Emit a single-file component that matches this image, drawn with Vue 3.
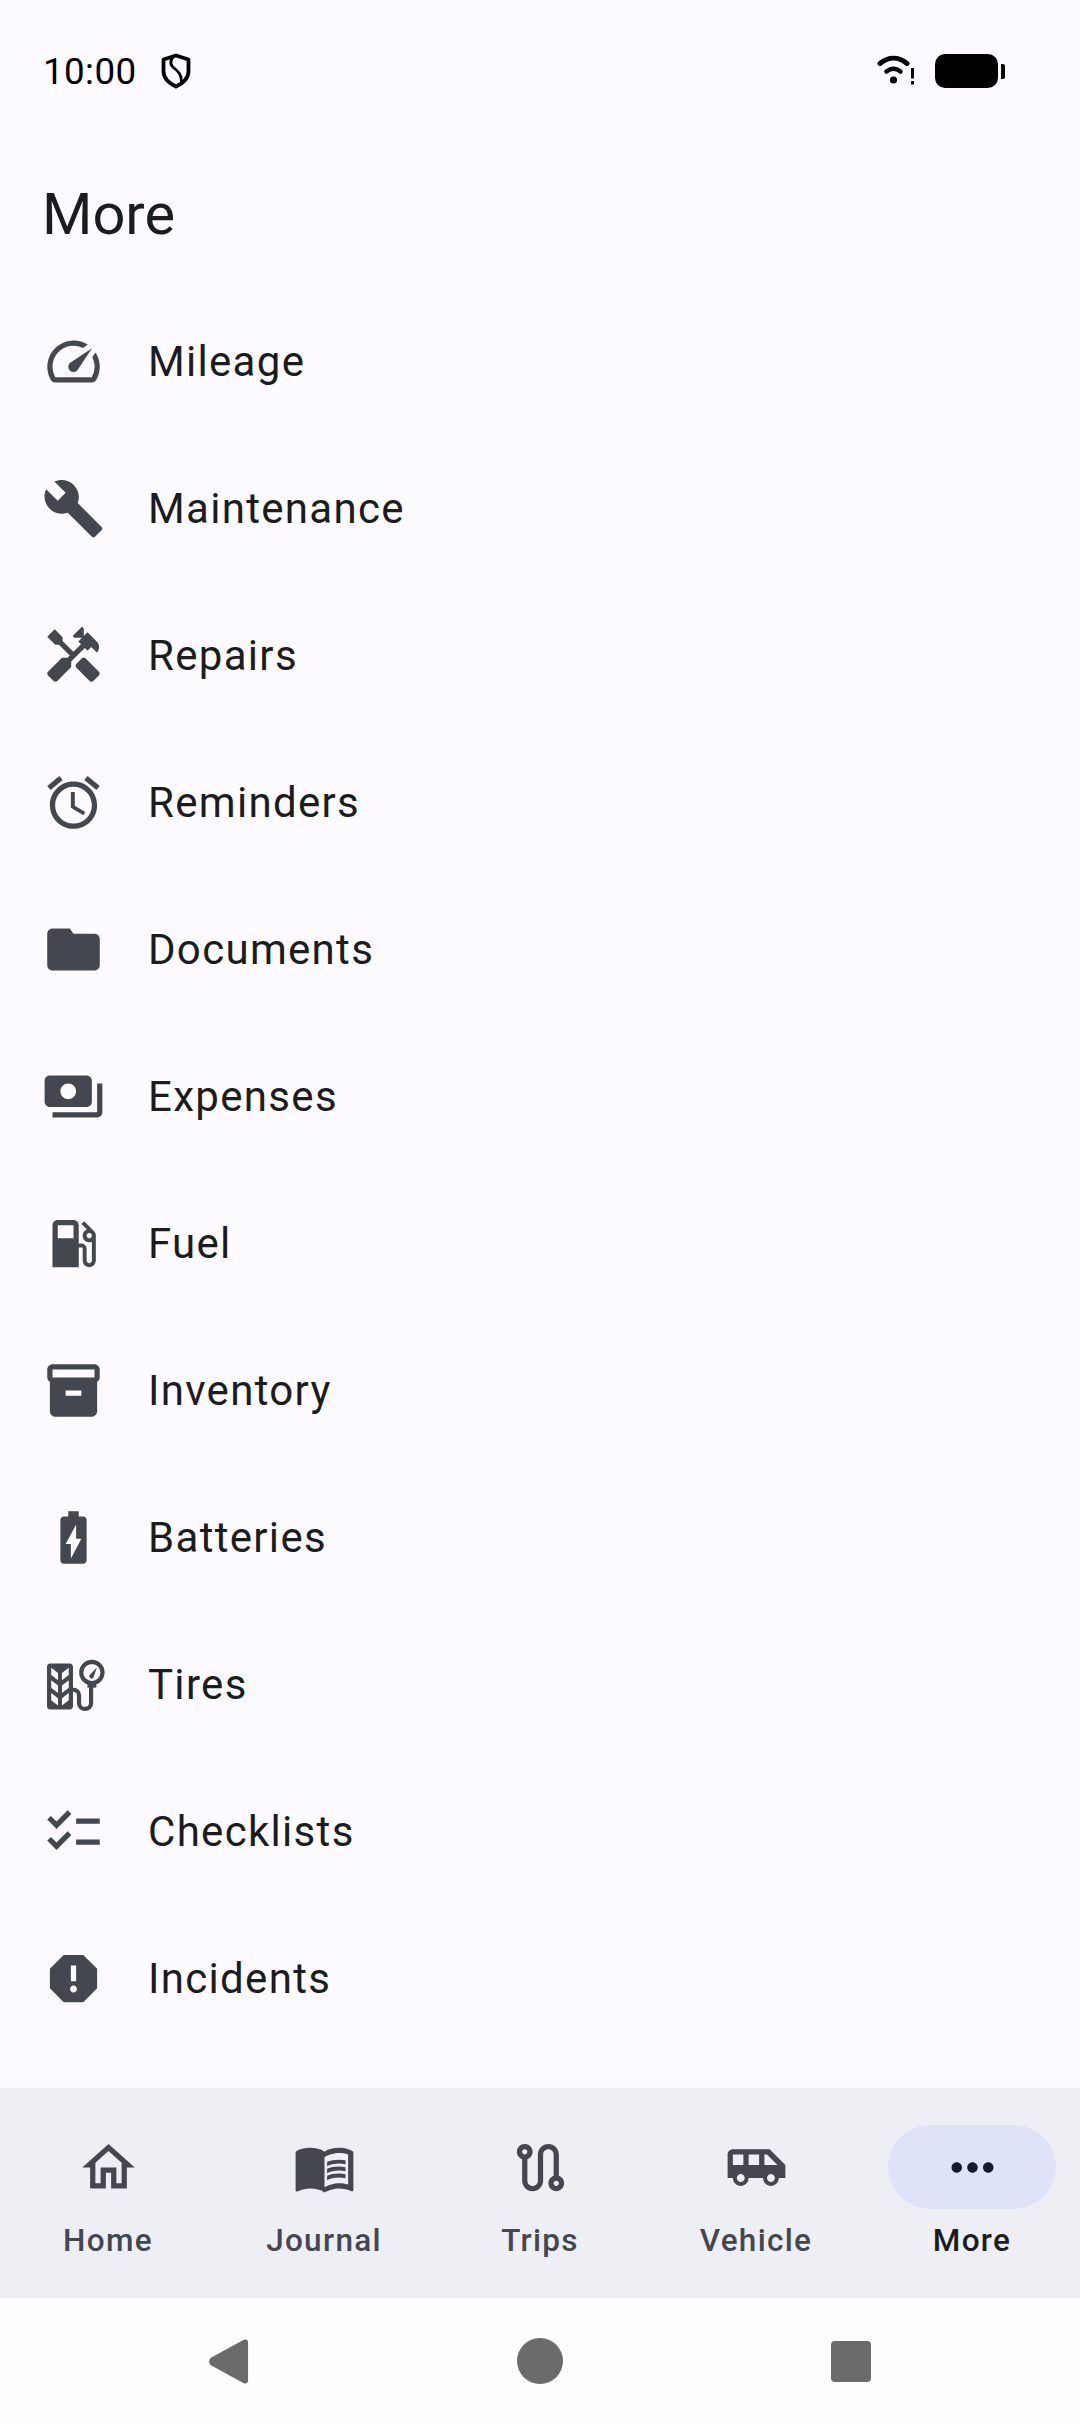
<script setup>
const menuItems = [
  { label: 'Mileage', paths: ['M20.38 8.57l-1.23 1.85a8 8 0 0 1-.22 7.58H5.07A8 8 0 0 1 15.58 6.85l1.85-1.23A10 10 0 0 0 3.35 19a2 2 0 0 0 1.72 1h13.85a2 2 0 0 0 1.74-1 10 10 0 0 0-.27-10.44zm-9.79 6.84a2 2 0 0 0 2.83 0l5.66-8.49-8.49 5.66a2 2 0 0 0 0 2.83z'] },
  { label: 'Maintenance', paths: ['M22.7 19l-9.1-9.1c.9-2.3.4-5-1.5-6.9-2-2-5-2.4-7.4-1.3L9 6 6 9 1.6 4.7C.4 7.1.9 10.1 2.9 12.1c1.9 1.9 4.6 2.4 6.9 1.5l9.1 9.1c.4.4 1 .4 1.4 0l2.3-2.3c.5-.4.5-1.1.1-1.4z'] },
  { label: 'Repairs', paths: ['M21.67 18.17l-5.3-5.3h-.99l-2.54 2.54v.99l5.3 5.3c.39.39 1.02.39 1.41 0l2.12-2.12c.39-.38.39-1.02 0-1.41z', 'M17.34 10.19l1.41-1.41 2.12 2.12c1.17-1.17 1.17-3.07 0-4.24l-3.54-3.54-1.41 1.41V1.71L15.22 1l-3.54 3.54.71.71h2.83l-1.41 1.41 1.06 1.06-2.89 2.89L7.85 6.48V5.06L4.83 2.04 2 4.87l3.03 3.03h1.41l4.13 4.13-.85.85H7.6l-5.3 5.3c-.39.39-.39 1.02 0 1.41l2.12 2.12c.39.39 1.02.39 1.41 0l5.3-5.3v-2.12l5.15-5.15 1.06 1.06z'] },
  { label: 'Reminders', paths: ['M22 5.72l-4.6-3.86-1.29 1.53 4.6 3.86L22 5.72zM7.88 3.39L6.6 1.86 2 5.71l1.29 1.53 4.59-3.85zM12.5 8H11v6l4.75 2.85.75-1.23-4-2.37V8zM12 4c-4.97 0-9 4.03-9 9s4.03 9 9 9 9-4.03 9-9-4.03-9-9-9zm0 16c-3.87 0-7-3.13-7-7s3.13-7 7-7 7 3.13 7 7-3.13 7-7 7z'] },
  { label: 'Documents', paths: ['M10.6 4H4c-1.1 0-2 .9-2 2v12c0 1.1.9 2 2 2h16c1.1 0 2-.9 2-2V8c0-1.1-.9-2-2-2h-8l-1.4-2z'] },
  { label: 'Expenses', paths: ['M19 14V6c0-1.1-.9-2-2-2H3c-1.1 0-2 .9-2 2v8c0 1.1.9 2 2 2h14c1.1 0 2-.9 2-2zm-9-1c-1.66 0-3-1.34-3-3s1.34-3 3-3 3 1.34 3 3-1.34 3-3 3zm13-6v11c0 1.1-.9 2-2 2H4v-2h17V7h2z'] },
  { label: 'Fuel', paths: ['M19.77 7.23l.01-.01-3.72-3.72L15 4.56l2.11 2.11c-.94.36-1.61 1.26-1.61 2.33 0 1.38 1.12 2.5 2.5 2.5.36 0 .69-.08 1-.21v7.21c0 .55-.45 1-1 1s-1-.45-1-1V14c0-1.1-.9-2-2-2h-1V5c0-1.1-.9-2-2-2H6c-1.1 0-2 .9-2 2v16h10v-7.5h1.5v5c0 1.38 1.12 2.5 2.5 2.5s2.5-1.12 2.5-2.5V9c0-.69-.28-1.32-.73-1.77zM12 10H6V5h6v5zm6 0c-.55 0-1-.45-1-1s.45-1 1-1 1 .45 1 1-.45 1-1 1z'] },
  { label: 'Inventory', paths: ['M20 2H4c-1 0-2 .9-2 2v3.01c0 .72.43 1.34 1 1.69V20c0 1.1 1.1 2 2 2h14c.9 0 2-.9 2-2V8.7c.57-.35 1-.97 1-1.69V4c0-1.1-1-2-2-2zm-5 12H9v-2h6v2zm5-7H4V4l16-.02V7z'] },
  { label: 'Batteries', paths: ['M15.67 4H14V2h-4v2H8.33C7.6 4 7 4.6 7 5.33v15.33C7 21.4 7.6 22 8.33 22h7.33c.74 0 1.34-.6 1.34-1.33V5.33C17 4.6 16.4 4 15.67 4zM11 20v-5.5H9L13 7v5.5h2L11 20z'] },
  { label: 'Tires', tire: true, paths: [] },
  { label: 'Checklists', paths: ['M22 7h-9v2h9V7zm0 8h-9v2h9v-2zM5.54 11 2 7.46l1.41-1.41 2.12 2.12 4.24-4.24 1.41 1.41L5.54 11zm0 8L2 15.46l1.41-1.41 2.12 2.12 4.24-4.24 1.41 1.41L5.54 19z'] },
  { label: 'Incidents', paths: ['M15.73 3H8.27L3 8.27v7.46L8.27 21h7.46L21 15.73V8.27L15.73 3zM12 17.3c-.72 0-1.3-.58-1.3-1.3 0-.72.58-1.3 1.3-1.3.72 0 1.3.58 1.3 1.3 0 .72-.58 1.3-1.3 1.3zm1-4.3h-2V7h2v6z'] },
]

const navItems = [
  { label: 'Home', paths: ['M12 5.69l5 4.5V18h-2v-6H9v6H7v-7.81l5-4.5M12 3L2 12h3v8h6v-6h2v6h6v-8h3L12 3z'] },
  { label: 'Journal', paths: ['M21 5c-1.11-.35-2.33-.5-3.5-.5-1.95 0-4.05.4-5.5 1.5-1.45-1.1-3.55-1.5-5.5-1.5S2.45 4.9 1 6v14.65c0 .25.25.5.5.5.1 0 .15-.05.25-.05C3.1 20.45 5.05 20 6.5 20c1.95 0 4.05.4 5.5 1.5 1.35-.85 3.8-1.5 5.5-1.5 1.65 0 3.35.3 4.75 1.05.1.05.15.05.25.05.25 0 .5-.25.5-.5V6c-.6-.45-1.25-.75-2-1zm0 13.5c-1.1-.35-2.3-.5-3.5-.5-1.7 0-4.15.65-5.5 1.5V8c1.35-.85 3.8-1.5 5.5-1.5 1.2 0 2.4.15 3.5.5v11.5z', 'M17.5 10.5c.88 0 1.73.09 2.5.26V9.24c-.79-.15-1.64-.24-2.5-.24-1.7 0-3.24.29-4.5.83v1.66c1.13-.64 2.7-.99 4.5-.99zM13 12.49v1.66c1.13-.64 2.7-.99 4.5-.99.88 0 1.73.09 2.5.26V11.9c-.79-.15-1.64-.24-2.5-.24-1.7 0-3.24.3-4.5.83zM17.5 14.33c-1.7 0-3.24.29-4.5.83v1.66c1.13-.64 2.7-.99 4.5-.99.88 0 1.73.09 2.5.26v-1.52c-.79-.16-1.64-.24-2.5-.24z'] },
  { label: 'Trips', paths: ['M19 15.18V7c0-2.21-1.79-4-4-4s-4 1.79-4 4v10c0 1.1-.9 2-2 2s-2-.9-2-2V8.82C8.16 8.4 9 7.3 9 6c0-1.66-1.34-3-3-3S3 4.34 3 6c0 1.3.84 2.4 2 2.82V17c0 2.21 1.79 4 4 4s4-1.79 4-4V7c0-1.1.9-2 2-2s2 .9 2 2v8.18c-1.16.41-2 1.51-2 2.82 0 1.66 1.34 3 3 3s3-1.34 3-3c0-1.3-.84-2.4-2-2.82zM6 7c-.55 0-1-.45-1-1s.45-1 1-1 1 .45 1 1-.45 1-1 1zm12 12c-.55 0-1-.45-1-1s.45-1 1-1 1 .45 1 1-.45 1-1 1z'] },
  { label: 'Vehicle', paths: ['M17 5H3c-1.1 0-2 .89-2 2v9h2c0 1.65 1.34 3 3 3s3-1.35 3-3h5.5c0 1.65 1.34 3 3 3s3-1.35 3-3H23v-5l-6-6zM3 11V7h4v4H3zm3 6.500c-.83 0-1.5-.67-1.5-1.5s.67-1.5 1.5-1.5 1.5.67 1.5 1.5-.67 1.5-1.5 1.5zm7-6.500H9V7h4v4zm4.500 6.500c-.83 0-1.5-.67-1.5-1.5s.67-1.5 1.5-1.5 1.5.67 1.5 1.5-.67 1.5-1.5 1.5zM15 11V7h1l4 4h-5z'] },
  { label: 'More', active: true, paths: ['M6 10c-1.1 0-2 .9-2 2s.9 2 2 2 2-.9 2-2-.9-2-2-2zm12 0c-1.1 0-2 .9-2 2s.9 2 2 2 2-.9 2-2-.9-2-2-2zm-6 0c-1.1 0-2 .9-2 2s.9 2 2 2 2-.9 2-2-.9-2-2-2z'] },
]
</script>

<template>
  <div class="screen">
    <div class="status-bar">
      <span class="clock">10:00</span>
      <svg class="shield" viewBox="0 0 30 36" width="30" height="36" fill="none" stroke="#000">
        <path d="M15 2.500 27.500 6.500V18c0 7-5 12-12.500 15.500C7.500 30 2.500 25 2.500 18V6.500z" stroke-width="3.800" stroke-linejoin="round" />
        <path d="M12.500 3.500C8.500 8 9 12 13.500 15.500 18 19 20.500 22 20.500 29" stroke-width="2.800" />
      </svg>
      <div class="status-right">
        <svg class="wifi" viewBox="0 0 40 32" width="40" height="32" fill="none" stroke="#000" stroke-linecap="round">
          <path d="M3 8.500C11.500 1.500 21.500 1.500 30 8.500" stroke-width="5" />
          <path d="M9.500 16.500C14 13 19 13 23.500 16.500" stroke-width="4.500" />
          <circle cx="16.500" cy="25" r="3.600" fill="#000" stroke="none" />
          <rect x="34" y="13" width="3" height="10.500" fill="#000" stroke="none" />
          <rect x="34" y="26" width="3" height="3.500" fill="#000" stroke="none" />
        </svg>
        <div class="battery"></div>
        <div class="battery-tip"></div>
      </div>
    </div>

    <h1 class="title">More</h1>

    <div class="menu">
      <div v-for="item in menuItems" :key="item.label" class="menu-row">
        <svg class="icon" viewBox="0 0 24 24" width="63" height="63" fill="#44474f">
          <path v-for="d in item.paths" :key="d" :d="d" />
          <template v-if="item.tire">
            <path fill-rule="evenodd" d="M3.100 4H10.600C11.300 4 11.800 4.500 11.800 5.200V20.300C11.800 21 11.300 21.500 10.600 21.500H3.100C2.400 21.500 1.900 21 1.900 20.300V5.200C1.900 4.500 2.400 4 3.100 4ZM3.500 5.600V8.400L6.100 10.400V7.600ZM10.200 5.600V8.400L7.600 10.400V7.600ZM3.500 10.400V13.200L6.100 15.200V12.400ZM10.200 10.400V13.200L7.600 15.200V12.400ZM3.500 15.200V18L6.100 20V17.200ZM10.200 15.200V18L7.600 20V17.200Z" />
            <path d="M11.800 14H12a2.100 2.100 0 0 1 2.100 2.100V19a2.300 2.300 0 0 0 4.600 0V12" fill="none" stroke="#44474f" stroke-width="1.600" />
            <circle cx="19" cy="7.400" r="4.050" fill="none" stroke="#44474f" stroke-width="1.600" />
            <path d="M17.300 11.300H20.700V13.200H17.300Z" />
            <path d="M18 8.600 20.900 5.500 19.600 9.300A.9.900 0 0 1 18 8.600Z" />
          </template>
        </svg>
        <span class="menu-label">{{ item.label }}</span>
      </div>
    </div>

    <div class="bottom-nav">
      <div v-for="item in navItems" :key="item.label" class="nav-item" :class="{ active: item.active }">
        <div class="nav-pill">
          <svg viewBox="0 0 24 24" width="63" height="63" :fill="item.active ? '#151b2c' : '#44474f'">
            <path v-for="d in item.paths" :key="d" :d="d" />
          </svg>
        </div>
        <span class="nav-label">{{ item.label }}</span>
      </div>
    </div>

    <div class="system-nav">
      <svg width="42" height="47" viewBox="0 0 44 48" fill="#6b6b6b">
        <path d="M3.500 19.800 37 1.500C40 0 42 1.500 42 4V44C42 46.500 40 48 37 46.500L3.500 28.200C.5 26 .5 22 3.500 19.800Z" />
      </svg>
      <div class="sys-circle"></div>
      <div class="sys-square"></div>
    </div>
  </div>
</template>

<style>
html,
body {
  margin: 0;
  background: #fdfbff;
}
</style>

<style scoped>
.screen {
  width: 1080px;
  height: 2424px;
  display: flex;
  flex-direction: column;
  background: #fdfbff;
  font-family: Roboto, "Liberation Sans", sans-serif;
  overflow: hidden;
}

.status-bar {
  height: 142px;
  flex-shrink: 0;
  box-sizing: border-box;
  padding: 0 75px 0 43px;
  display: flex;
  align-items: center;
}

.clock {
  font-size: 36.750px;
  letter-spacing: 0.4px;
  color: #000;
}

.shield {
  margin-left: 24px;
}

.status-right {
  margin-left: auto;
  display: flex;
  align-items: center;
}

.wifi {
  margin-right: 18px;
}

.battery {
  width: 63px;
  height: 34px;
  border-radius: 10px;
  background: #000;
}

.battery-tip {
  width: 4px;
  height: 15px;
  margin-left: 3px;
  border-radius: 0 2px 2px 0;
  background: #000;
}

.title {
  margin: 0;
  height: 144px;
  padding-bottom: 2px;
  flex-shrink: 0;
  padding-left: 42px;
  display: flex;
  align-items: center;
  font-size: 57.750px;
  font-weight: 400;
  color: #1a1c1e;
}

.menu {
  flex: 1;
}

.menu-row {
  height: 147px;
  display: flex;
  align-items: center;
  padding-left: 42px;
  gap: 43px;
}

.icon {
  flex-shrink: 0;
}

.menu-label {
  font-size: 42px;
  letter-spacing: 1.310px;
  color: #1a1c1e;
}

.bottom-nav {
  height: 210px;
  flex-shrink: 0;
  display: flex;
  background: #eeeff5;
}

.nav-item {
  flex: 1;
  display: flex;
  flex-direction: column;
  align-items: center;
  padding-top: 37px;
}

.nav-pill {
  width: 168px;
  height: 84px;
  border-radius: 42px;
  display: flex;
  align-items: center;
  justify-content: center;
}

.active .nav-pill {
  background: #dfe3f7;
}

.nav-label {
  margin-top: 12px;
  font-size: 31.500px;
  font-weight: 500;
  letter-spacing: 1.310px;
  line-height: 40px;
  color: #44474f;
}

.active .nav-label {
  color: #1a1c1e;
}

.system-nav {
  height: 126px;
  flex-shrink: 0;
  display: grid;
  grid-template-columns: repeat(3, 1fr);
  justify-items: center;
  align-items: center;
  padding: 0 73px;
  background: #fdfdfe;
}

.sys-circle {
  width: 46px;
  height: 46px;
  border-radius: 50%;
  background: #6b6b6b;
}

.sys-square {
  width: 40px;
  height: 41px;
  border-radius: 4px;
  background: #6b6b6b;
}
</style>
